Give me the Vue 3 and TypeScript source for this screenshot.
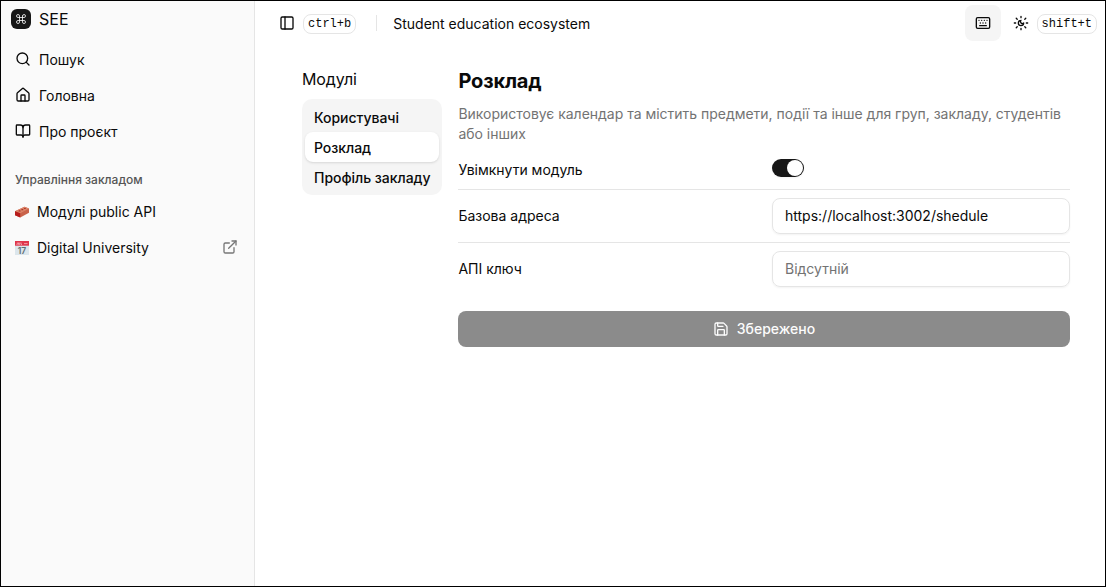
<script setup lang="ts">
import { ref } from 'vue'

const icons: Record<string, string[]> = {
  command: ['M15 6v12a3 3 0 1 0 3-3H6a3 3 0 1 0 3 3V6a3 3 0 1 0-3 3h12a3 3 0 1 0-3-3'],
  search: ['m21 21-4.3-4.3', 'M19 11a8 8 0 1 1-16 0 8 8 0 0 1 16 0z'],
  house: [
    'M15 21v-8a1 1 0 0 0-1-1h-4a1 1 0 0 0-1 1v8',
    'M3 10a2 2 0 0 1 .709-1.528l7-5.999a2 2 0 0 1 2.582 0l7 5.999A2 2 0 0 1 21 10v9a2 2 0 0 1-2 2H5a2 2 0 0 1-2-2z',
  ],
  book: [
    'M12 7v14',
    'M3 18a1 1 0 0 1-1-1V4a1 1 0 0 1 1-1h5a4 4 0 0 1 4 4 4 4 0 0 1 4-4h5a1 1 0 0 1 1 1v13a1 1 0 0 1-1 1h-6a3 3 0 0 0-3 3 3 3 0 0 0-3-3z',
  ],
}

const nav = [
  { icon: 'search', label: 'Пошук' },
  { icon: 'house', label: 'Головна' },
  { icon: 'book', label: 'Про проєкт' },
]
const managed = [
  { picture: 'brick', label: 'Модулі public API', external: false },
  { picture: 'calendar', label: 'Digital University', external: true },
]
const modules = ['Користувачі', 'Розклад', 'Профіль закладу']
const active = ref('Розклад')
const enabled = ref(true)
const address = ref('https://localhost:3002/shedule')
const apiKey = ref('')
</script>

<template>
  <div class="app">
    <aside class="sidebar">
      <div class="brand">
        <span class="logo">
          <svg class="icon logo-icon" viewBox="0 0 24 24"><path v-for="d in icons.command" :key="d" :d="d" /></svg>
        </span>
        <span>SEE</span>
      </div>
      <nav class="nav">
        <a v-for="item in nav" :key="item.label" class="nav-item">
          <svg class="icon" viewBox="0 0 24 24"><path v-for="d in icons[item.icon]" :key="d" :d="d" /></svg>
          <span>{{ item.label }}</span>
        </a>
      </nav>
      <div class="group-label">Управління закладом</div>
      <nav class="managed">
        <a v-for="item in managed" :key="item.label" class="managed-item">
          <svg v-if="item.picture === 'brick'" class="picture" viewBox="0 0 14 14">
            <path d="M0 6.2 9.5 1.8 14 3.6v4.2L5.2 12.4 0 10.2z" fill="#c9634a" />
            <path d="M0 6.2 9.5 1.8 14 3.6 5.2 8.2z" fill="#dc8468" />
            <path d="M0 6.2 5.2 8.2v4.2L0 10.2z" fill="#b71c1c" />
            <ellipse cx="4.6" cy="5.9" rx="1.1" ry=".6" fill="#a83226" />
            <ellipse cx="7.3" cy="4.7" rx="1.1" ry=".6" fill="#a83226" />
            <ellipse cx="9.9" cy="3.5" rx="1.1" ry=".6" fill="#a83226" />
          </svg>
          <svg v-else class="picture" viewBox="0 0 14 14">
            <path d="M0 4h14v10H0z" fill="#dce6ec" />
            <path d="M0 0h14v4.7H0z" fill="#e0354b" />
            <path d="M1.5 3.4h.8V1.5M3.5 1.5v1.9h1.2V1.5M6 1.5v1.9h1M9 2.6h3.5" fill="none" stroke="#f8c9cf" stroke-width=".7" />
            <text x="7" y="12.5" text-anchor="middle" class="day">17</text>
          </svg>
          <span>{{ item.label }}</span>
          <svg v-if="item.external" class="icon external" viewBox="0 0 24 24">
            <path d="M15 3h6v6" /><path d="M10 14 21 3" />
            <path d="M18 13v6a2 2 0 0 1-2 2H5a2 2 0 0 1-2-2V8a2 2 0 0 1 2-2h6" />
          </svg>
        </a>
      </nav>
    </aside>

    <div class="main">
      <header class="topbar">
        <svg class="icon" viewBox="0 0 24 24"><rect x="3" y="3" width="18" height="18" rx="2" /><path d="M9 3v18" /></svg>
        <kbd class="kbd kbd-left">ctrl+b</kbd>
        <span class="divider"></span>
        <span class="title">Student education ecosystem</span>
        <button class="key-button" type="button" aria-label="Клавіатура">
          <svg class="icon" viewBox="0 0 24 24">
            <path d="M10 8h.01M12 12h.01M14 8h.01M16 12h.01M18 8h.01M6 8h.01M7 16h10M8 12h.01" />
            <rect x="2" y="4" width="20" height="16" rx="2" />
          </svg>
        </button>
        <svg class="icon theme" viewBox="0 0 24 24">
          <path d="M12 8a2.83 2.83 0 0 0 4 4 4 4 0 1 1-4-4" />
          <path d="M12 2v2M12 20v2M4.9 4.9l1.4 1.4M17.7 17.7l1.4 1.4M2 12h2M20 12h2M6.3 17.7l-1.4 1.4M19.1 4.9l-1.4 1.4" />
        </svg>
        <kbd class="kbd">shift+t</kbd>
      </header>

      <div class="content">
        <section class="modules">
          <h2>Модулі</h2>
          <div class="tabs">
            <button
              v-for="name in modules"
              :key="name"
              type="button"
              class="tab"
              :class="{ active: name === active }"
              @click="active = name"
            >{{ name }}</button>
          </div>
        </section>

        <section class="settings">
          <h1>Розклад</h1>
          <p>Використовує календар та містить предмети, події та інше для груп, закладу, студентів або інших</p>
          <div class="row row-switch">
            <span>Увімкнути модуль</span>
            <button type="button" role="switch" class="switch" :class="{ on: enabled }" @click="enabled = !enabled">
              <span class="thumb"></span>
            </button>
          </div>
          <div class="row">
            <span>Базова адреса</span>
            <input v-model="address" type="text" />
          </div>
          <div class="row last">
            <span>АПІ ключ</span>
            <input v-model="apiKey" type="text" placeholder="Відсутній" />
          </div>
          <button class="save" type="button">
            <svg class="icon" viewBox="0 0 24 24">
              <path d="M15.2 3a2 2 0 0 1 1.4.6l3.8 3.8a2 2 0 0 1 .6 1.4V19a2 2 0 0 1-2 2H5a2 2 0 0 1-2-2V5a2 2 0 0 1 2-2z" />
              <path d="M17 21v-7a1 1 0 0 0-1-1H8a1 1 0 0 0-1 1v7" /><path d="M7 3v4a1 1 0 0 0 1 1h7" />
            </svg>
            <span>Збережено</span>
          </button>
        </section>
      </div>
    </div>
  </div>
</template>

<style>
body {
  margin: 0;
  background: #fff;
}
</style>

<style scoped>
* {
  box-sizing: border-box;
}
.app {
  display: flex;
  width: 1106px;
  height: 587px;
  border: 1px solid #000;
  font-family: Inter, 'Liberation Sans', sans-serif;
  font-size: 14px;
  line-height: 20px;
  color: #0a0a0a;
  background: #fff;
  overflow: hidden;
}
button,
input {
  font: inherit;
  color: inherit;
  margin: 0;
}
button {
  border: 0;
  padding: 0;
}
.icon {
  width: 16px;
  height: 16px;
  flex: none;
  fill: none;
  stroke: currentColor;
  stroke-width: 2;
  stroke-linecap: round;
  stroke-linejoin: round;
}
.sidebar {
  width: 254px;
  flex: none;
  background: #fafafa;
  border-right: 1px solid #e5e5e5;
}
.brand {
  display: flex;
  align-items: center;
  gap: 8px;
  height: 36px;
  padding-left: 10px;
  font-size: 16px;
}
.logo {
  display: flex;
  align-items: center;
  justify-content: center;
  width: 20px;
  height: 20px;
  border-radius: 6px;
  background: #171717;
  color: #fafafa;
}
.logo-icon {
  width: 12px;
  height: 12px;
  stroke-width: 1.6;
}
.nav {
  display: flex;
  flex-direction: column;
  padding: 5px 0 0 14px;
}
.nav-item {
  display: flex;
  align-items: center;
  gap: 8px;
  height: 36px;
}
.nav-item .icon {
  position: relative;
  top: -1px;
}
.group-label {
  height: 24px;
  margin-top: 14px;
  padding: 8px 0 8px 14px;
  font-size: 12px;
  line-height: 16px;
  font-weight: 500;
  color: #555;
}
.managed {
  display: flex;
  flex-direction: column;
  padding: 6px 16px 0 14px;
}
.managed-item {
  display: flex;
  align-items: center;
  gap: 8px;
  height: 36px;
}
.picture {
  width: 14px;
  height: 14px;
}
.day {
  font-size: 8.5px;
  font-weight: 600;
  fill: #5c6b73;
}
.external {
  margin: 0 0 2px auto;
  color: #777;
}
.main {
  flex: 1;
  min-width: 0;
}
.topbar {
  display: flex;
  align-items: center;
  height: 44px;
  padding: 0 8px 0 24px;
}
.title {
  padding-top: 2px;
}
.kbd {
  height: 20px;
  padding: 0 4px;
  margin-top: 1px;
  border: 1px solid #e5e5e5;
  border-radius: 8px;
  font-family: 'Liberation Mono', monospace;
  font-size: 12px;
  line-height: 19px;
}
.kbd-left {
  margin-left: 8px;
}
.divider {
  width: 1px;
  height: 16px;
  margin: 0 16px 0 20px;
  background: #e5e5e5;
}
.key-button {
  display: flex;
  align-items: center;
  justify-content: center;
  width: 36px;
  height: 36px;
  margin-left: auto;
  border-radius: 8px;
  background: #f5f5f5;
}
.theme {
  margin: 0 8px 0 12px;
}
.content {
  display: flex;
  gap: 16px;
  padding: 22px 35px 0 47px;
}
.modules {
  width: 140px;
  flex: none;
}
h2 {
  margin: 0 0 8px;
  font-size: 16px;
  line-height: 24px;
  font-weight: 400;
  letter-spacing: -0.1px;
}
.tabs {
  display: flex;
  flex-direction: column;
  padding: 3px;
  border-radius: 10px;
  background: #f5f5f5;
}
.tab {
  height: 30px;
  padding: 2px 9px 0;
  border-radius: 8px;
  background: transparent;
  font-weight: 500;
  letter-spacing: -0.03px;
  text-align: left;
  white-space: nowrap;
}
.tab.active {
  background: #fff;
  box-shadow: 0 1px 3px rgba(0, 0, 0, 0.1), 0 1px 2px -1px rgba(0, 0, 0, 0.1);
}
.settings {
  flex: 1;
  min-width: 0;
}
h1 {
  margin: 0;
  font-size: 20px;
  line-height: 28px;
  font-weight: 700;
  letter-spacing: -0.15px;
}
h1,
p,
.row > span {
  padding-left: 0.4px;
}
p {
  margin: 9px 0 8px;
  color: #737373;
  letter-spacing: -0.015px;
}
.row {
  display: grid;
  grid-template-columns: 314px 1fr;
  align-items: center;
  height: 53px;
  border-bottom: 1px solid #e5e5e5;
}
.row-switch {
  height: 38px;
  padding-bottom: 1px;
}
.row.last {
  border-bottom: 0;
  height: 52px;
}
.switch {
  width: 32px;
  height: 18px;
  margin-bottom: 4px;
  padding: 1px;
  border-radius: 9px;
  background: #e5e5e5;
  box-shadow: 0 1px 2px rgba(0, 0, 0, 0.05);
}
.switch.on {
  background: #171717;
}
.thumb {
  display: block;
  width: 16px;
  height: 16px;
  border-radius: 50%;
  background: #fff;
}
.switch.on .thumb {
  margin-left: 14px;
}
input {
  width: 100%;
  height: 36px;
  padding: 0 12px 1px;
  border: 1px solid #e5e5e5;
  border-radius: 8px;
  outline: 0;
  background: transparent;
  box-shadow: 0 1px 2px rgba(0, 0, 0, 0.05);
}
input::placeholder {
  color: #737373;
  opacity: 1;
}
.save {
  display: flex;
  align-items: center;
  justify-content: center;
  gap: 8px;
  width: 100%;
  height: 36px;
  margin-top: 16px;
  border-radius: 8px;
  background: #8b8b8b;
  color: #fcfcfc;
  font-weight: 500;
}
</style>
